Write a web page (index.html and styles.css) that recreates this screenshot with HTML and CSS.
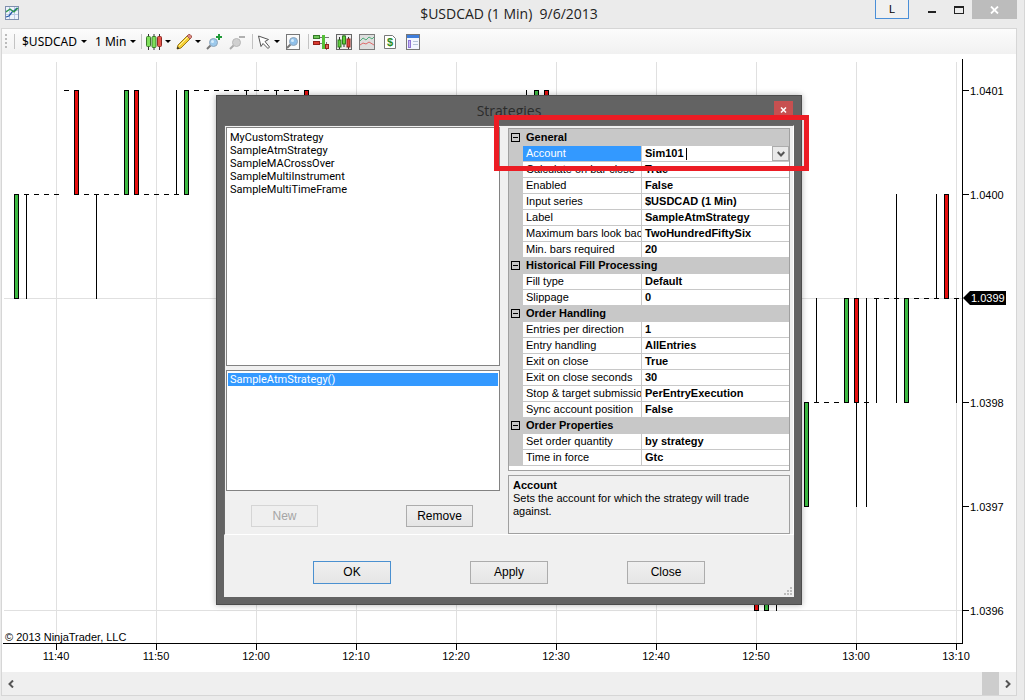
FILE: index.html
```html
<!DOCTYPE html>
<html lang="en">
<head>
    <meta charset="UTF-8">
    <title>$USDCAD (1 Min) 9/6/2013</title>
    <link rel="stylesheet" href="styles.css">
</head>
<body>
<div class="window">
    <header class="titlebar">
        <svg class="app-icon" width="14" height="14" viewBox="0 0 14 14">
            <rect x=".5" y=".5" width="13" height="13" fill="#eef3fb" stroke="#7f8fae"/>
            <path d="M1 4.500h12M1 8.500h12M4.500 1v12M9.500 1v12" stroke="#b9c8e4" fill="none"/>
            <path d="M1 11l3-1 3-4 2-1 3-3" stroke="#2458a8" stroke-width="1.300" fill="none"/>
            <path d="M1 6l4-3 4 3 4-4" stroke="#2d9a4a" stroke-width="1.300" fill="none"/>
        </svg>
        <h1>$USDCAD (1 Min)&nbsp; 9/6/2013</h1>
        <div class="window-buttons">
            <button class="link-btn">L</button>
            <button class="min-btn" aria-label="Minimize"><i></i></button>
            <button class="max-btn" aria-label="Maximize"><i></i></button>
            <button class="close-btn" aria-label="Close window">
                <svg width="9" height="8" viewBox="0 0 9 8"><path d="M1 .5l7 7M8 .5l-7 7" stroke="#fff" stroke-width="1.800"/></svg>
            </button>
        </div>
    </header>

    <div class="client">
        <div class="toolbar">
            <span class="grip"></span>
            <span class="sep"></span>
            <button class="menu text">$USDCAD</button>
            <button class="menu text">1 Min</button>
            <span class="sep"></span>
            <button class="menu" aria-label="Chart style">
                <svg width="16" height="16" viewBox="0 0 16 16">
                    <path d="M2.500 0v16M8 0v16M13.500 0v16" stroke="#333"/>
                    <rect x=".5" y="2.500" width="4" height="10" rx="1" fill="#7ee05a" stroke="#3c7a2c"/>
                    <rect x="6" y="2.500" width="4" height="11" rx="1" fill="#7ee05a" stroke="#3c7a2c"/>
                    <rect x="11.500" y="2.500" width="4" height="10" rx="1" fill="#e4574c" stroke="#8f2a24"/>
                </svg>
            </button>
            <button class="menu" aria-label="Drawing tools">
                <svg width="16" height="16" viewBox="0 0 16 16">
                    <path d="M1 15l1-4L11 2l3 3-9 9z" fill="#f5cf35" stroke="#9a7a1c"/>
                    <path d="M3 12l9-9" stroke="#fff3a0"/>
                    <path d="M11 2l1.500-1.500h1.500l1.500 1.500v1.500L14 5z" fill="#dd8b84" stroke="#a45a50"/>
                    <path d="M1 15l.6-2.400 1.900 1.800z" fill="#222"/>
                </svg>
            </button>
            <button class="tool" aria-label="Zoom in">
                <svg width="16" height="16" viewBox="0 0 16 16">
                    <path d="M1 15l4-4" stroke="#777" stroke-width="2"/>
                    <circle cx="7.500" cy="8.500" r="4" fill="#9cc9ec" stroke="#8fa5ba"/>
                    <circle cx="6.500" cy="7.500" r="1.500" fill="#d8eefc"/>
                    <path d="M13 0v6M10 3h6" stroke="#1f9a37" stroke-width="2"/>
                </svg>
            </button>
            <button class="tool" aria-label="Zoom out">
                <svg width="16" height="16" viewBox="0 0 16 16">
                    <path d="M1 15l4-4" stroke="#aaa" stroke-width="2"/>
                    <circle cx="7.500" cy="8.500" r="4" fill="#d0d0d0" stroke="#b8b8b8"/>
                    <path d="M10 3h6" stroke="#b0b0b0" stroke-width="2"/>
                </svg>
            </button>
            <span class="sep"></span>
            <button class="menu" aria-label="Pointer">
                <svg width="14" height="16" viewBox="0 0 14 16">
                    <path d="M1.500 2l10 3.500-3.500 2 4.500 5.500-1.500 1.500-5-5-2 3z" fill="#fff" stroke="#555"/>
                </svg>
            </button>
            <button class="tool" aria-label="Data box">
                <svg width="16" height="16" viewBox="0 0 16 16">
                    <rect x="1.500" y=".5" width="13" height="15" fill="#fafafa" stroke="#777"/>
                    <path d="M2 14l4-4" stroke="#777" stroke-width="2"/>
                    <circle cx="8.500" cy="7.500" r="4" fill="#8fc0ea" stroke="#8fa5ba"/>
                    <circle cx="7.500" cy="6.500" r="1.500" fill="#d4ebfb"/>
                </svg>
            </button>
            <span class="sep"></span>
            <button class="tool" aria-label="Chart trader">
                <svg width="16" height="16" viewBox="0 0 16 16">
                    <path d="M0 3.500h16M0 9.500h10M13.500 8v8" stroke="#777"/>
                    <rect x=".5" y="1.500" width="6" height="3" fill="#6fc75a" stroke="#357a28"/>
                    <rect x=".5" y="7.500" width="6" height="3" fill="#d93a30" stroke="#912019"/>
                    <path d="M10.500 1v14" stroke="#54c038" stroke-width="3"/>
                    <rect x="12.500" y="10.500" width="3" height="4" fill="#d8665c" stroke="#912019"/>
                </svg>
            </button>
            <button class="tool" aria-label="Data series">
                <svg width="16" height="16" viewBox="0 0 16 16">
                    <rect x=".5" y=".5" width="15" height="15" fill="#eee" stroke="#666"/>
                    <path d="M3.500 3v12M8 1v12M12.500 3v12" stroke="#333"/>
                    <rect x="2" y="6" width="3" height="7" fill="#5fd03c" stroke="#2f7a1e"/>
                    <rect x="6.500" y="2" width="3" height="8" fill="#5fd03c" stroke="#2f7a1e"/>
                    <rect x="11" y="5" width="3" height="8" fill="#e0473d" stroke="#912019"/>
                </svg>
            </button>
            <button class="tool" aria-label="Indicators">
                <svg width="16" height="16" viewBox="0 0 16 16">
                    <rect x=".5" y=".5" width="15" height="15" fill="#dedede" stroke="#7c7c7c"/>
                    <path d="M1 7l3-3 3 2 3-3 3 2 2-2" stroke="#4fae7a" fill="none"/>
                    <path d="M1 11l3-2 3 1 3-2 5 3" stroke="#dd6a6a" fill="none"/>
                </svg>
            </button>
            <button class="tool" aria-label="Strategies">
                <svg width="16" height="16" viewBox="0 0 16 16">
                    <path d="M2.500 1.500h8l3 3v10h-11z" fill="#fff" stroke="#777"/>
                    <text class="dollar" x="8" y="12" text-anchor="middle">$</text>
                </svg>
            </button>
            <button class="tool" aria-label="Properties">
                <svg width="16" height="16" viewBox="0 0 16 16">
                    <rect x="1.500" y=".5" width="13" height="15" fill="#f3f6ff" stroke="#777"/>
                    <path d="M2 2.500h12" stroke="#3f7edb" stroke-width="3"/>
                    <rect x="3.500" y="6.500" width="2" height="7" fill="#c9b8f4" stroke="#8f76d6"/>
                    <path d="M8 7.500h5M8 10.500h5" stroke="#b5c3da"/>
                </svg>
            </button>
        </div>

        <svg class="chart" viewBox="2 54 1014 617" preserveAspectRatio="xMinYMin meet" role="img" aria-label="USDCAD one minute candlestick chart">
            <path class="gridline" d="M56.500 62V643M156.500 62V643M256.500 62V643M356.500 62V643M456.500 62V643M556.500 62V643M656.500 62V643M756.500 62V643M856.500 62V643M956.500 62V643M4 298.500H962M4 610.500H962"/>

            <!-- flat bars: open equals close -->
            <path class="bar-line" d="M24 194.500h5m5 0h5m5 0h5m5 0h5M64 90.500h5M84 194.500h5m5 0h5m5 0h5m5 0h5M144 194.500h5m5 0h5m5 0h5m5 0h5M194 90.500h5m5 0h5m5 0h5m5 0h5m5 0h5m5 0h5m5 0h5m5 0h5m5 0h5m5 0h5m5 0h5"/>
            <path class="bar-line" d="M814 402.500h5m5 0h5m5 0h5M864 402.500h5M874 298.500h5m5 0h5m5 0h5M914 298.500h5m5 0h5m5 0h5M954 298.500h5"/>
            <!-- wicks -->
            <path class="bar-line" d="M26.500 194V299M96.500 194V299M176.500 90V195M246.500 90V100M276.500 90V100M526.500 90V100M776.500 600V611M816.500 298V403M856.500 402V507M866.500 298V507M876.500 298V403M896.500 194V403M936.500 194V299M956.500 298V403"/>

            <g class="up">
                <rect x="14.500" y="194.500" width="4" height="104"/>
                <rect x="124.500" y="90.500" width="4" height="104"/>
                <rect x="184.500" y="90.500" width="4" height="104"/>
                <rect x="534.500" y="90.500" width="4" height="104"/>
                <rect x="764.500" y="506.500" width="4" height="104"/>
                <rect x="804.500" y="402.500" width="4" height="104"/>
                <rect x="844.500" y="298.500" width="4" height="104"/>
                <rect x="904.500" y="298.500" width="4" height="104"/>
            </g>
            <g class="down">
                <rect x="74.500" y="90.500" width="4" height="104"/>
                <rect x="134.500" y="90.500" width="4" height="104"/>
                <rect x="304.500" y="90.500" width="4" height="104"/>
                <rect x="544.500" y="90.500" width="4" height="104"/>
                <rect x="754.500" y="506.500" width="4" height="104"/>
                <rect x="854.500" y="298.500" width="4" height="104"/>
                <rect x="944.500" y="194.500" width="4" height="104"/>
            </g>

            <path class="bar-line" d="M962.500 59V643.500M3 643.500H963M962 90.500h7M962 194.500h7M962 402.500h7M962 506.500h7M962 610.500h7M56.500 643v7M156.500 643v7M256.500 643v7M356.500 643v7M456.500 643v7M556.500 643v7M656.500 643v7M756.500 643v7M856.500 643v7M956.500 643v7"/>
            <path d="M963 298l7-7h36v14h-36z"/>

            <g class="axis-text">
                <text x="970" y="95">1.0401</text>
                <text x="970" y="199">1.0400</text>
                <text class="last-price" x="971" y="302">1.0399</text>
                <text x="970" y="407">1.0398</text>
                <text x="970" y="511">1.0397</text>
                <text x="970" y="615">1.0396</text>
                <text x="5" y="641">© 2013 NinjaTrader, LLC</text>
            </g>
            <g class="axis-text" text-anchor="middle">
                <text x="56" y="660">11:40</text>
                <text x="156" y="660">11:50</text>
                <text x="256" y="660">12:00</text>
                <text x="356" y="660">12:10</text>
                <text x="456" y="660">12:20</text>
                <text x="556" y="660">12:30</text>
                <text x="656" y="660">12:40</text>
                <text x="756" y="660">12:50</text>
                <text x="856" y="660">13:00</text>
                <text x="956" y="660">13:10</text>
            </g>
        </svg>

        <div class="scrollbar">
            <button aria-label="Scroll left"><svg width="8" height="8" viewBox="0 0 8 8"><path d="M6 .5L2.500 4 6 7.500" fill="none" stroke="#555" stroke-width="2"/></svg></button>
            <span class="thumb"></span>
            <button aria-label="Scroll right"><svg width="8" height="8" viewBox="0 0 8 8"><path d="M2 .5L5.500 4 2 7.500" fill="none" stroke="#555" stroke-width="2"/></svg></button>
        </div>
    </div>
</div>

<section class="dialog" role="dialog" aria-labelledby="dlg-title">
    <header class="dialog-title">
        <h2 id="dlg-title">Strategies</h2>
        <button class="dialog-x" aria-label="Close dialog"><svg width="7" height="6" viewBox="0 0 7 6"><path d="M1 .5l5 5M6 .5l-5 5" stroke="#fff" stroke-width="1.500"/></svg></button>
    </header>
    <div class="dialog-body">
        <div class="panel">
            <div class="left">
                <ul class="listbox available" role="listbox" aria-label="Available strategies">
                    <li role="option">MyCustomStrategy</li>
                    <li role="option">SampleAtmStrategy</li>
                    <li role="option">SampleMACrossOver</li>
                    <li role="option">SampleMultiInstrument</li>
                    <li role="option">SampleMultiTimeFrame</li>
                </ul>
                <ul class="listbox active" role="listbox" aria-label="Configured strategies">
                    <li class="selected" role="option" aria-selected="true">SampleAtmStrategy()</li>
                </ul>
                <div class="list-buttons">
                    <button class="btn small" disabled>New</button>
                    <button class="btn small">Remove</button>
                </div>
            </div>
            <div class="right">
                <div class="propgrid">
                    <table>
                        <colgroup><col class="c-gutter"><col class="c-name"><col></colgroup>
                        <tbody>
                        <tr class="cat"><td><button class="toggle" aria-label="Collapse General"></button></td><th colspan="2">General</th></tr>
                        <tr class="current"><td></td><th><label for="account">Account</label></th>
                            <td><div class="editor"><input id="account" type="text" value="Sim101"><span class="caret"></span><button aria-label="Show accounts"><svg width="8" height="6" viewBox="0 0 8 6"><path d="M.7 1L4 4.500 7.300 1" fill="none" stroke="#555" stroke-width="2"/></svg></button></div></td></tr>
                        <tr><td></td><th>Calculate on bar close</th><td>True</td></tr>
                        <tr><td></td><th>Enabled</th><td>False</td></tr>
                        <tr><td></td><th>Input series</th><td>$USDCAD (1 Min)</td></tr>
                        <tr><td></td><th>Label</th><td>SampleAtmStrategy</td></tr>
                        <tr><td></td><th>Maximum bars look back</th><td>TwoHundredFiftySix</td></tr>
                        <tr><td></td><th>Min. bars required</th><td>20</td></tr>
                        <tr class="cat"><td><button class="toggle" aria-label="Collapse Historical Fill Processing"></button></td><th colspan="2">Historical Fill Processing</th></tr>
                        <tr><td></td><th>Fill type</th><td>Default</td></tr>
                        <tr><td></td><th>Slippage</th><td>0</td></tr>
                        <tr class="cat"><td><button class="toggle" aria-label="Collapse Order Handling"></button></td><th colspan="2">Order Handling</th></tr>
                        <tr><td></td><th>Entries per direction</th><td>1</td></tr>
                        <tr><td></td><th>Entry handling</th><td>AllEntries</td></tr>
                        <tr><td></td><th>Exit on close</th><td>True</td></tr>
                        <tr><td></td><th>Exit on close seconds</th><td>30</td></tr>
                        <tr><td></td><th>Stop &amp; target submission</th><td>PerEntryExecution</td></tr>
                        <tr><td></td><th>Sync account position</th><td>False</td></tr>
                        <tr class="cat"><td><button class="toggle" aria-label="Collapse Order Properties"></button></td><th colspan="2">Order Properties</th></tr>
                        <tr><td></td><th>Set order quantity</th><td>by strategy</td></tr>
                        <tr><td></td><th>Time in force</th><td>Gtc</td></tr>
                        </tbody>
                    </table>
                </div>
                <div class="help">
                    <h3>Account</h3>
                    <p>Sets the account for which the strategy will trade against.</p>
                </div>
            </div>
        </div>
        <footer class="dialog-buttons">
            <button class="btn default">OK</button>
            <button class="btn">Apply</button>
            <button class="btn">Close</button>
        </footer>
        <svg class="size-grip" width="8" height="8" viewBox="0 0 8 8"><path d="M6 0h2v2H6zM3 3h2v2H3zM6 3h2v2H6zM0 6h2v2H0zM3 6h2v2H3zM6 6h2v2H6z" fill="#bdbdbd"/></svg>
    </div>
    <div class="highlight"></div>
</section>
</body>
</html>
```
FILE: styles.css
```css
*{
    margin: 0;
    padding: 0;
    box-sizing: border-box;
}
body{
    background: #ebebeb;
    font: 11px/13px "Liberation Sans", Arial, sans-serif;
    color: #000;
    overflow: hidden;
}
button{
    border: 0;
    background: none;
    font: inherit;
    color: inherit;
}
svg{
    display: block;
}
ul{
    list-style: none;
}

/* main window */
.window{
    height: 100vh;
    display: flex;
    flex-direction: column;
    padding: 0 7px 4px 1px;
    border-right: 1px solid #d6d6d6;
}
.titlebar{
    height: 28px;
    display: grid;
    grid-template-columns: 1fr auto 1fr;
    align-items: start;
}
.app-icon{
    margin: 6px 0 0 4px;
}
.titlebar h1{
    font: 14px/20px "Open Sans", sans-serif;
    padding-top: 4px;
    color: #222;
}
.window-buttons{
    display: flex;
    justify-content: flex-end;
}
.window-buttons button{
    height: 19px;
    display: flex;
    justify-content: center;
    align-items: center;
}
.link-btn{
    width: 34px;
    border: 1px solid #4a8fd8;
    border-top: 0;
    background: #f0f0f0;
    margin-right: 9px;
}
.min-btn{
    width: 27px;
}
.min-btn i{
    width: 8px;
    height: 2px;
    background: #222;
    margin-top: 4px;
}
.max-btn{
    width: 27px;
}
.max-btn i{
    width: 10px;
    height: 8px;
    border: 1px solid #222;
    border-top-width: 2px;
}
.close-btn{
    width: 45px;
    background: #bcbcbc;
}
.client{
    flex: 1;
    min-height: 0;
    display: flex;
    flex-direction: column;
    border: 1px solid #d6d6d6;
    background: #fff;
}

/* toolbar */
.toolbar{
    height: 25px;
    display: flex;
    align-items: center;
    padding-left: 3px;
    background: linear-gradient(#fcfcfc, #f1f1f1);
}
.grip{
    width: 2px;
    height: 15px;
    margin-right: 7px;
    background: repeating-linear-gradient(#bbb 0 2px, transparent 2px 4px);
}
.sep{
    width: 1px;
    height: 15px;
    background: #c3c3c3;
    margin-right: 4px;
}
.menu{
    display: flex;
    align-items: center;
    margin-right: 5px;
}
.menu::after{
    content: "";
    border: 3px solid transparent;
    border-top-color: #000;
    border-bottom: 0;
    margin-left: 3px;
}
.menu.text{
    font: 12px/16px "Noto Sans", sans-serif;
    margin-left: 3px;
}
.menu.text::after{
    margin-left: 4px;
}
.tool{
    margin-right: 7px;
}
.dollar{
    font: bold 11px "Liberation Sans", sans-serif;
    fill: #2a8a1e;
}

/* chart */
.chart{
    flex: 1;
    min-height: 0;
    width: 100%;
}
.gridline{
    stroke: #e0e0e0;
    fill: none;
}
.bar-line{
    stroke: #000;
    fill: none;
}
.up rect{
    fill: #3cb942;
    stroke: #000;
}
.down rect{
    fill: #e60f0f;
    stroke: #000;
}
.axis-text{
    font-size: 11px;
}
.last-price{
    fill: #fff;
}
.scrollbar{
    height: 23px;
    display: flex;
    background: #efefef;
}
.scrollbar button{
    width: 17px;
    display: flex;
    justify-content: center;
    align-items: center;
}
.thumb{
    width: 17px;
    background: #cdcdcd;
    margin-left: auto;
}

/* strategies dialog */
.dialog{
    position: absolute;
    left: 216px;
    top: 95px;
    width: 586px;
    padding: 0 7px 7px;
    border: 1px solid #4c4c4c;
    background: #636363;
    box-shadow: 0 0 6px rgba(0, 0, 0, .3);
}
.dialog-title{
    height: 29px;
    display: flex;
    justify-content: center;
    position: relative;
}
.dialog-title h2{
    font: 14px/20px "Open Sans", sans-serif;
    color: #2b2b2b;
    padding-top: 5px;
}
.dialog-x{
    position: absolute;
    right: 1px;
    top: 5px;
    width: 19px;
    height: 18px;
    display: flex;
    justify-content: center;
    align-items: center;
    background: #c75050;
}
.dialog-body{
    position: relative;
    background: #f0f0f0;
}
.panel{
    display: flex;
    gap: 8px;
    padding: 1px 3px 0 1px;
    border: 1px solid #696969;
    border-right-color: #fff;
    border-bottom-color: #fff;
}
.left{
    flex: 0 0 274px;
}
.right{
    flex: 1;
    min-width: 0;
    padding-top: 1px;
}
.listbox{
    border: 1px solid #828282;
    background: #fff;
    padding: 2px 1px;
    font-family: Roboto, sans-serif;
}
.listbox li{
    padding-left: 2px;
}
.listbox .selected{
    background: #3399ff;
    color: #fff;
}
.available{
    height: 239px;
    padding-top: 3px;
}
.active{
    height: 121px;
    margin-top: 4px;
}
.list-buttons{
    display: flex;
    justify-content: space-between;
    padding: 14px 27px 7px 25px;
}
.btn{
    width: 78px;
    height: 23px;
    border: 1px solid #acacac;
    background: linear-gradient(#f0f0f0, #e5e5e5);
    font-size: 12px;
}
.btn.small{
    width: 67px;
    height: 22px;
}
.btn:disabled{
    border-color: #d5d5d5;
    background: #efefef;
    color: #a5a5a5;
}
.btn.default{
    border-color: #4a90d0;
}

.propgrid{
    height: 343px;
    border: 1px solid #a0a0a0;
    background: #fff;
}
table{
    width: 100%;
    table-layout: fixed;
    border-collapse: separate;
    border-spacing: 0;
    border-top: 1px solid #c8c8c8;
}
.c-gutter{
    width: 14px;
}
.c-name{
    width: 119px;
}
tr{
    height: 16px;
}
th, td{
    height: 16px;
    line-height: 15px;
    border-bottom: 1px solid #c8c8c8;
    overflow: hidden;
    white-space: nowrap;
    text-align: left;
    font-weight: normal;
    padding-left: 3px;
}
th{
    border-right: 1px solid #c8c8c8;
}
td{
    font-weight: bold;
}
td:first-child{
    padding-left: 2px;
    background: #c8c8c8;
}
.cat th{
    background: #c8c8c8;
    font-weight: bold;
}
.current th{
    background: #3399ff;
    color: #fff;
}
.toggle{
    display: block;
    width: 9px;
    height: 9px;
    border: 1px solid #000;
    background: linear-gradient(#000, #000) center / 5px 1px no-repeat;
}
.editor{
    display: flex;
    height: 15px;
}
.editor input{
    width: 41px;
    border: 0;
    outline: 0;
    background: none;
    font: inherit;
}
.caret{
    width: 1px;
    height: 12px;
    background: #000;
    margin-top: 2px;
}
.editor button{
    width: 17px;
    margin-left: auto;
    border: 1px solid #acacac;
    background: #e9e9e9;
    display: flex;
    justify-content: center;
    align-items: center;
}
.help{
    height: 59px;
    margin-top: 4px;
    padding: 3px 4px;
    border: 1px solid #a0a0a0;
}
.help h3{
    font-size: 11px;
}
.dialog-buttons{
    display: flex;
    justify-content: space-between;
    padding: 26px 89px 13px;
}
.size-grip{
    position: absolute;
    right: 2px;
    bottom: 2px;
}

/* callout frame round the account row */
.highlight{
    position: absolute;
    left: 277px;
    top: 19px;
    width: 315px;
    height: 56px;
    border: 5px solid #ec1c24;
}
```
